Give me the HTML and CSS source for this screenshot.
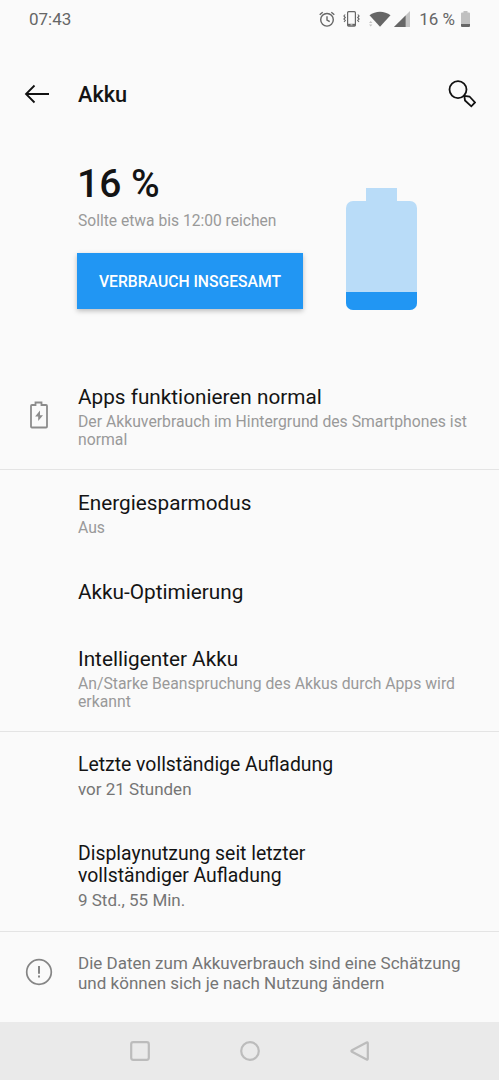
FILE: index.html
```html
<!DOCTYPE html>
<html lang="de">
<head>
  <meta charset="UTF-8" />
  <meta name="viewport" content="width=device-width, initial-scale=1" />
  <title>Akku</title>
  <link rel="stylesheet" href="styles.css">
</head>
<body>
  <div class="statusbar">
    <span class="time">07:43</span>
    <div class="status-icons">
      <svg class="alarm" width="16" height="16" viewBox="0 0 16 16" fill="none" stroke="#666" stroke-width="1.4">
        <circle cx="8" cy="8.8" r="6.300" />
        <path d="M8 5.300v3.800l2.700 1.600M.7 3.800l3-2.600M15.300 3.800l-3-2.600" />
      </svg>
      <svg class="vibrate" width="17" height="16" viewBox="0 0 17 16" fill="none" stroke="#666" stroke-width="1.2">
        <rect x="4.6" y=".7" width="7.8" height="14.4" rx="1" />
        <path d="M4.7 13.8h7.6" stroke-width="2" />
        <path d="M2.2 3.5L.9 5l1.4 1.5L.9 8l1.4 1.5L1 11M14.8 3.5L16.1 5l-1.4 1.5L16.1 8l-1.4 1.5L16 11" stroke-width="1.1" />
        <path d="M7.5 13.8h2" stroke="#fafafa" stroke-width=".8" />
      </svg>
      <svg class="wifi" width="22" height="16" viewBox="0 0 22 16">
        <path d="M.5 4.200C6.300-.5 15.700-.5 21.500 4.200L11 15.700z" fill="#666" />
        <path d="M0 12l1.700-2 1.700 2zM0 13.600h3.400l-1.700 2z" fill="#c4c4c4" />
      </svg>
      <svg class="signal" width="16" height="16" viewBox="0 0 16 16">
        <path d="M0 16L16 0v16z" fill="#c4c4c4" />
        <path d="M0 16L11.600 4.400V16z" fill="#666" />
      </svg>
      <span class="percent">16 %</span>
      <svg class="mini-battery" width="9" height="16" viewBox="0 0 9 16">
        <path d="M2.500 0h4v1.600H8q1 0 1 1V13H0V2.600q0-1 1-1h1.500z" fill="#c0c0c0" />
        <path d="M0 13h9v2q0 1-1 1H1q-1 0-1-1z" fill="#666" />
      </svg>
    </div>
  </div>

  <header>
    <svg class="back" width="26" height="20" viewBox="0 0 26 20" fill="none" stroke="#111" stroke-width="1.8">
      <path d="M25 10H2M10.500 1.500L2 10l8.500 8.500" />
    </svg>
    <h1>Akku</h1>
    <svg class="search" width="28" height="28" viewBox="0 0 28 28" fill="none" stroke="#111" stroke-width="1.8">
      <circle cx="10" cy="9.600" r="8.500" />
      <path d="M16.300 15.900l5.200.6 5.500 5.900-3.700 3.900-6.300-5.800z" />
    </svg>
  </header>

  <div class="hero">
    <div class="hero-text">
      <div class="level">16 %</div>
      <div class="estimate">Sollte etwa bis 12:00 reichen</div>
      <button>VERBRAUCH INSGESAMT</button>
    </div>
    <div class="battery">
      <div class="battery-cap"></div>
      <div class="battery-body">
        <div class="battery-fill"></div>
      </div>
    </div>
  </div>

  <section class="with-icon">
    <svg class="row-icon charge" width="18" height="28" viewBox="0 0 18 28" fill="none" stroke="#8c8c8c" stroke-width="1.800">
      <path d="M1.900 4h3.600V1.500h6V4h4.600q.9 0 .9 1v20.500q0 1-.9 1H1.900q-.9 0-.9-1V5q0-1 .9-1z" />
      <path d="M10 9.500v4.700h3L8.200 20v-4.600H5.100z" fill="#8c8c8c" stroke="none" />
    </svg>
    <div class="item">
      <h2>Apps funktionieren normal</h2>
      <p>Der Akkuverbrauch im Hintergrund des Smartphones ist<br>normal</p>
    </div>
  </section>

  <section>
    <div class="item">
      <h2>Energiesparmodus</h2>
      <p>Aus</p>
    </div>
    <div class="item">
      <h2>Akku-Optimierung</h2>
    </div>
    <div class="item">
      <h2>Intelligenter Akku</h2>
      <p>An/Starke Beanspruchung des Akkus durch Apps wird<br>erkannt</p>
    </div>
  </section>

  <section class="usage">
    <div class="item">
      <h2>Letzte vollständige Aufladung</h2>
      <p>vor 21 Stunden</p>
    </div>
    <div class="item">
      <h2>Displaynutzung seit letzter<br>vollständiger Aufladung</h2>
      <p>9 Std., 55 Min.</p>
    </div>
  </section>

  <section class="with-icon note">
    <svg class="row-icon info" width="28" height="28" viewBox="0 0 28 28" fill="none" stroke="#858585" stroke-width="1.700">
      <circle cx="14" cy="14" r="12.300" />
      <path d="M14 8v7.700M14 17.500v2" stroke-width="2" />
    </svg>
    <p>Die Daten zum Akkuverbrauch sind eine Schätzung<br>und können sich je nach Nutzung ändern</p>
  </section>

  <nav>
    <svg width="20" height="20" viewBox="0 0 20 20"><rect x="1.200" y="1.200" width="17.600" height="17.600" rx="2" /></svg>
    <svg width="20" height="20" viewBox="0 0 20 20"><circle cx="10" cy="10" r="8.800" /></svg>
    <svg width="20" height="20" viewBox="0 0 20 20"><path d="M17.800 2.200v15.600q0 1.300-1.200.7L2 10.800q-1.200-.8 0-1.500L16.600 1.500q1.200-.6 1.200.7z" /></svg>
  </nav>
</body>
</html>
```

FILE: styles.css
```css
* {
  box-sizing: border-box;
}
body {
  display: flex;
  flex-direction: column;
  height: 1080px;
  margin: 0;
  overflow: hidden;
  font-family: Roboto, sans-serif;
  background: #fafafa;
  color: #141414;
}
h1, h2, p {
  margin: 0;
  font-weight: 400;
  white-space: nowrap;
}
svg {
  display: block;
  flex-shrink: 0;
}
.statusbar {
  display: flex;
  justify-content: space-between;
  align-items: center;
  height: 38px;
  padding: 0 29px;
  font-size: 17px;
  color: #666;
}
.status-icons {
  display: flex;
  align-items: center;
}
.vibrate {
  margin-left: 8px;
}
.wifi {
  margin-left: 9px;
}
.signal {
  margin-left: 3px;
}
.percent {
  margin-left: 9px;
}
.mini-battery {
  margin-left: 6px;
}
header {
  display: flex;
  align-items: center;
  height: 112px;
  padding: 0 23px 0 24px;
}
h1 {
  flex: 1;
  margin-left: 28px;
  font-size: 21.75px;
  font-weight: 500;
}
.hero {
  display: flex;
  height: 213px;
  padding-left: 77px;
}
.hero-text {
  width: 269px;
}
.level {
  margin-top: 10px;
  font-size: 39px;
  font-weight: 500;
  line-height: 48px;
}
.estimate {
  margin-top: 4px;
  padding-left: 1px;
  font-size: 15.6px;
  line-height: 18px;
  color: #999;
  white-space: nowrap;
}
button {
  display: block;
  width: 226px;
  height: 56px;
  margin-top: 22.5px;
  padding: 1px 0 0;
  border: none;
  background: #2196f3;
  color: white;
  font-family: inherit;
  font-size: 15.7px;
  font-weight: 500;
  box-shadow: 0 2px 5px rgba(0, 0, 0, 0.25);
}
.battery {
  display: flex;
  flex-direction: column;
  align-items: center;
  width: 71px;
  padding-top: 38px;
}
.battery-cap {
  width: 31px;
  height: 13px;
  background: #b9dcf8;
}
.battery-body {
  display: flex;
  align-items: flex-end;
  width: 71px;
  height: 109px;
  border-radius: 7px;
  overflow: hidden;
  background: #b9dcf8;
}
.battery-fill {
  width: 100%;
  height: 18px;
  background: #2196f3;
}
section {
  padding-left: 78px;
  border-bottom: 1px solid #e4e4e4;
}
.with-icon {
  display: flex;
  padding-left: 0;
}
.row-icon {
  margin-left: 30px;
  margin-right: 30px;
}
.charge {
  margin-top: 38px;
}
.item {
  padding: 22.5px 0 21.25px;
}
.item:last-child {
  padding-bottom: 19px;
}
h2 {
  font-size: 20.75px;
  line-height: 22.5px;
}
.item p {
  margin-top: 4.5px;
  font-size: 15.75px;
  line-height: 18.5px;
  color: #999;
}
.usage h2 {
  font-size: 19.4px;
}
.usage .item {
  padding-bottom: 21.5px;
}
.usage .item p {
  margin-top: 3.5px;
  font-size: 17px;
  color: #757575;
}
.note {
  flex: 1;
  padding-top: 21px;
  border-bottom: none;
}
.note p {
  font-size: 17px;
  line-height: 20px;
  color: #757575;
}
.info {
  margin: 5px 25px 0;
}
nav {
  display: flex;
  justify-content: center;
  align-items: center;
  gap: 90px;
  height: 58px;
  background: #eaeaea;
}
nav svg {
  fill: none;
  stroke: #bcbcbc;
  stroke-width: 2.2;
}
```
